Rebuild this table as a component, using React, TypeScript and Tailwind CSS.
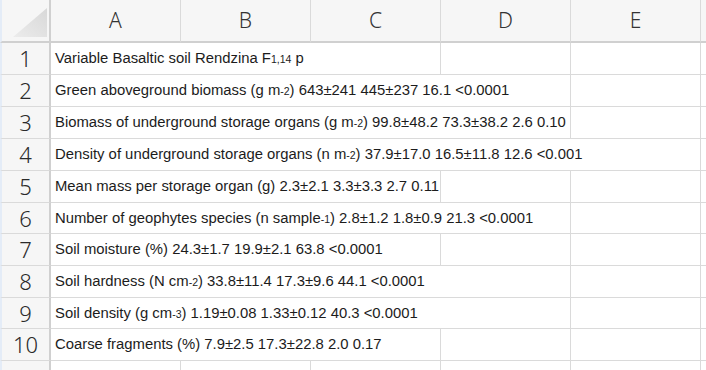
import React from 'react';

const Sub: React.FC<{ children: React.ReactNode }> = ({ children }) => (
  <span className="text-[10.5px]">{children}</span>
);

type Row = { n: number; span: number; h: string; content: React.ReactNode };

const rows: Row[] = [
  { n: 1, span: 3, h: 'h-[32px]', content: <>Variable Basaltic soil Rendzina F<Sub>1,14</Sub> p</> },
  { n: 2, span: 4, h: 'h-[32px]', content: <>Green aboveground biomass (g m<Sub>-2</Sub>) 643±241 445±237 16.1 &lt;0.0001</> },
  { n: 3, span: 4, h: 'h-[32px]', content: <>Biomass of underground storage organs (g m<Sub>-2</Sub>) 99.8±48.2 73.3±38.2 2.6 0.10</> },
  { n: 4, span: 5, h: 'h-[32px]', content: <>Density of underground storage organs (n m<Sub>-2</Sub>) 37.9±17.0 16.5±11.8 12.6 &lt;0.001</> },
  { n: 5, span: 3, h: 'h-[32px]', content: <>Mean mass per storage organ (g) 2.3±2.1 3.3±3.3 2.7 0.11</> },
  { n: 6, span: 4, h: 'h-[31px]', content: <>Number of geophytes species (n sample<Sub>-1</Sub>) 2.8±1.2 1.8±0.9 21.3 &lt;0.0001</> },
  { n: 7, span: 3, h: 'h-[32px]', content: <>Soil moisture (%) 24.3±1.7 19.9±2.1 63.8 &lt;0.0001</> },
  { n: 8, span: 4, h: 'h-[32px]', content: <>Soil hardness (N cm<Sub>-2</Sub>) 33.8±11.4 17.3±9.6 44.1 &lt;0.0001</> },
  { n: 9, span: 4, h: 'h-[31px]', content: <>Soil density (g cm<Sub>-3</Sub>) 1.19±0.08 1.33±0.12 40.3 &lt;0.0001</> },
  { n: 10, span: 3, h: 'h-[32px]', content: <>Coarse fragments (%) 7.9±2.5 17.3±22.8 2.0 0.17</> },
];

const spanClass: Record<number, string> = {
  1: 'col-span-1',
  2: 'col-span-2',
  3: 'col-span-3',
  4: 'col-span-4',
  5: 'col-span-5',
};

const cols = ['A', 'B', 'C', 'D', 'E'];

const rowNum = 'border-l-2 border-l-[#e4ecf7] border-r-2 border-r-[#d0d0d0] border-b border-b-[#dadada] bg-[#f6f6f6] flex items-center justify-center text-[22px] text-[#2a2a2a] font-["Noto_Sans",sans-serif] font-light';
const cell = 'border-r border-b border-[#dadada] bg-white';

export default function App() {
  return (
    <div className="w-[706px] h-[370px] overflow-hidden bg-white font-['Liberation_Sans',Arial,sans-serif]">
      <div className="grid grid-cols-[51px_130px_130px_130px_130px_130px_1fr]">
        {/* header */}
        <div className="h-[43px] border-l-2 border-l-[#e4ecf7] border-r-2 border-r-[#d0d0d0] border-b-2 border-b-[#d0d0d0] bg-[#f6f6f6] relative">
          <svg className="absolute left-[11px] top-[8px]" width="34" height="29" viewBox="0 0 34 29">
            <defs>
              <linearGradient id="tri" x1="0" y1="1" x2="1" y2="0">
                <stop offset="0" stopColor="#ececec" />
                <stop offset="1" stopColor="#d8d8d8" />
              </linearGradient>
            </defs>
            <polygon points="0,29 34,29 34,0" fill="url(#tri)" />
          </svg>
        </div>
        {cols.map((c) => (
          <div
            key={c}
            className="h-[43px] border-r border-r-[#dadada] border-b-2 border-b-[#d0d0d0] bg-[#f6f6f6] flex items-center justify-center text-[21px] text-[#333] font-['Noto_Sans',sans-serif] font-light"
          >
            {c}
          </div>
        ))}
        <div className="h-[43px] border-b-2 border-b-[#d0d0d0] bg-[#f6f6f6]" />

        {/* body */}
        {rows.map((r) => (
          <React.Fragment key={r.n}>
            <div className={`${r.h} ${rowNum}`}>{r.n}</div>
            <div
              className={`${r.h} ${cell} ${spanClass[r.span]} flex items-center pl-[4px] whitespace-nowrap overflow-hidden text-[14.85px] text-[#1c1c1c]`}
            >
              <span>{r.content}</span>
            </div>
            {Array.from({ length: 5 - r.span }).map((_, i) => (
              <div key={i} className={`${r.h} ${cell}`} />
            ))}
            <div className={`${r.h} border-b border-[#dadada] bg-white`} />
          </React.Fragment>
        ))}

        {/* partial row 11 */}
        <div className={`h-[32px] ${rowNum}`}></div>
        {cols.map((c) => (
          <div key={c} className={`h-[32px] ${cell}`} />
        ))}
        <div className="h-[32px] bg-white" />
      </div>
    </div>
  );
}
